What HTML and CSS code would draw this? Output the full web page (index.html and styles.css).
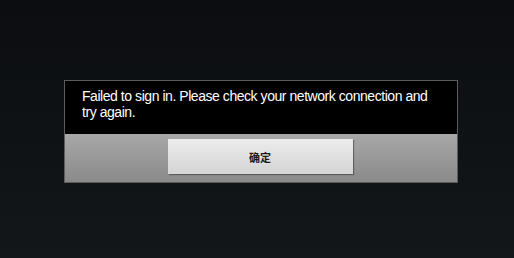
FILE: index.html
```html
<!DOCTYPE html>
<html>
<head>
<meta charset="utf-8">
<link rel="stylesheet" href="styles.css">
</head>
<body>
<div class="screen">
  <div class="dialog">
    <div class="message">Failed to sign in. Please check your network connection and try again.</div>
    <div class="actions">
      <div class="btn">确定</div>
    </div>
  </div>
</div>
</body>
</html>
```
FILE: styles.css
```css
html, body {
  margin: 0;
  padding: 0;
}
body {
  width: 514px;
  height: 258px;
  overflow: hidden;
  background: linear-gradient(#0b0d10, #13171a);
  font-family: "Liberation Sans", "Noto Sans CJK SC", sans-serif;
}
.screen {
  padding: 80px 56px 0 64px;
}
.dialog {
  width: 392px;
  border: 1px solid #5a5c5e;
  background: #000;
}
.message {
  height: 53px;
  box-sizing: border-box;
  padding: 7px 20px 0 17px;
  color: #fff;
  font-size: 14px;
  letter-spacing: -0.45px;
  line-height: 16px;
}
.actions {
  height: 48px;
  box-sizing: border-box;
  padding-top: 5px;
  display: flex;
  justify-content: center;
  background: linear-gradient(#a8a8a8, #8a8a8a);
}
.btn {
  width: 185px;
  height: 35px;
  margin-left: -2px;
  box-sizing: border-box;
  display: flex;
  align-items: center;
  justify-content: center;
  background: linear-gradient(#ececec, #d4d4d4);
  box-shadow: 1px 1px 1px rgba(0,0,0,0.35);
  color: #1a1a1a;
  font-size: 11px;
  font-weight: bold;
  font-family: "Noto Sans CJK SC", sans-serif;
}
```
